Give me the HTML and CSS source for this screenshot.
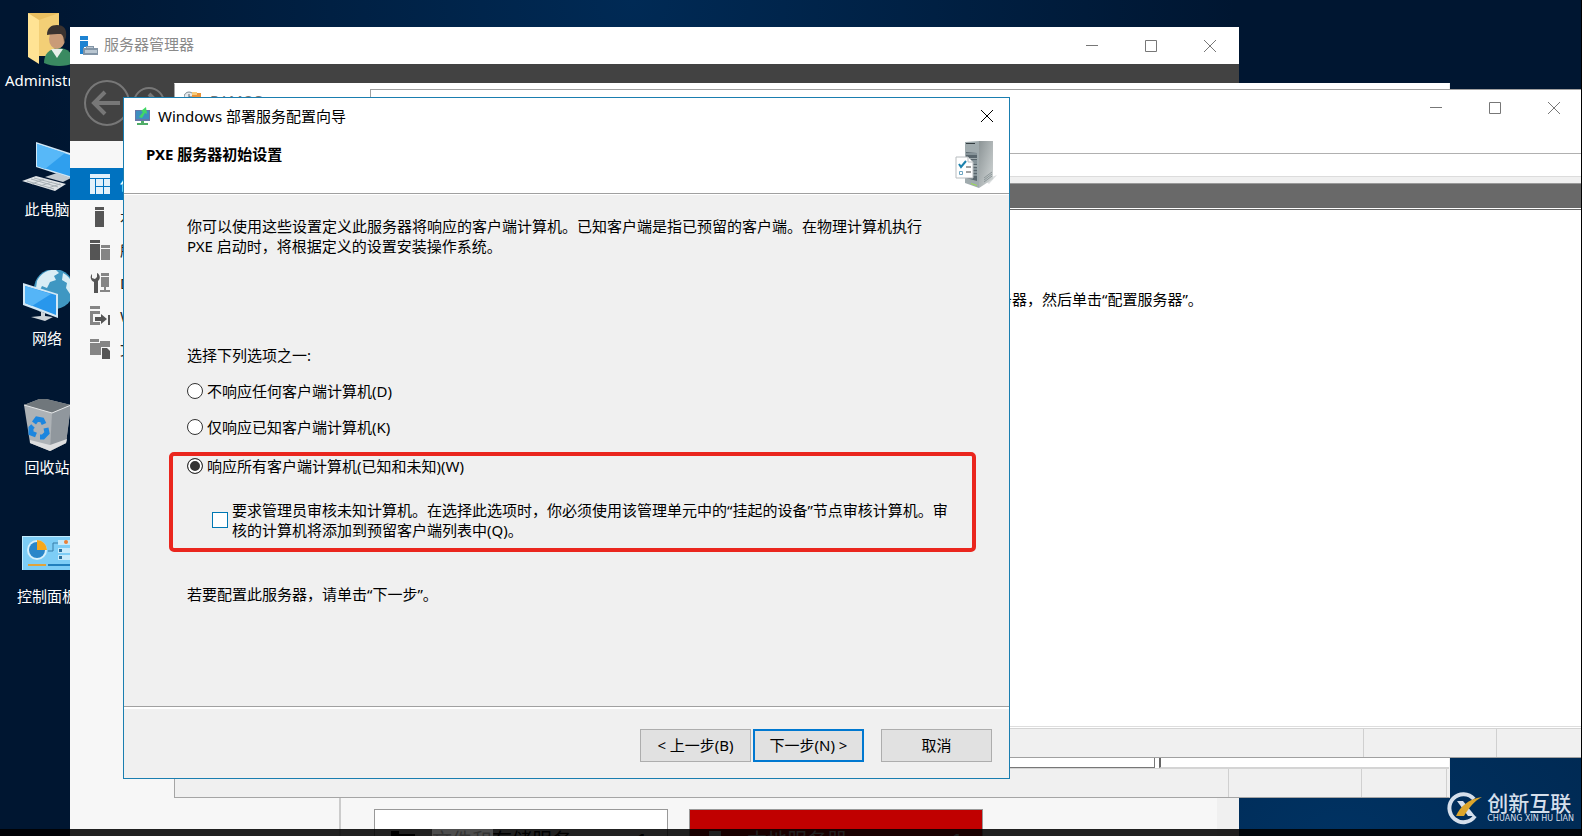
FILE: index.html
```html
<!DOCTYPE html>
<html lang="zh-CN">
<head>
  <meta charset="UTF-8" />
  <meta name="viewport" content="width=device-width, initial-scale=1.0"/>
  <title>Windows 部署服务配置向导</title>
  <link rel="stylesheet" href="styles.css">
</head>
<body>
  <main class="desktop">

    <!-- desktop shortcuts -->
    <nav class="shortcuts">
      <a class="shortcut" href="#">
        <svg width="56" height="56" viewBox="0 0 56 56">
          <path d="M8 1h31v43H18z" fill="#e9bf60"/>
          <path d="M8 1l11 7v44L8 45z" fill="#ffe394"/>
          <path d="M19 8L39 1v43H19z" fill="#f3cf76"/>
          <path d="M24 51c0-9 5-14 14-15 10 0 16 6 16 15-8 4-22 4-30 0z" fill="#3a8a61"/>
          <path d="M31 37l6 9 6-9z" fill="#e8efe9"/>
          <ellipse cx="37" cy="27" rx="8" ry="10" fill="#c99b78"/>
          <path d="M27 23c0-7 4-10 10-10 7 0 10 4 9 12l-2 6c0-5-1-8-3-9-5 0-10 0-14 1z" fill="#3b3330"/>
        </svg>
        <span>Administrator</span>
      </a>
      <a class="shortcut" href="#">
        <svg width="56" height="56" viewBox="0 0 56 56">
          <path d="M16 1l40 13v25L16 26z" fill="#cfe6f5"/>
          <path d="M17 3l39 13v21L17 25z" fill="#2f9fee"/>
          <path d="M17 3l28 9-20 16-8-3z" fill="#57b8f8"/>
          <path d="M25 36l12-4 14 5-8 4z" fill="#c3cbd1"/>
          <path d="M2 40l14-5 30 8-11 7z" fill="#dfe3e6"/>
          <path d="M7 40l27 8M11 38l27 8M14 37l27 7M12 43l12-5M20 45l12-4M28 47l12-4" stroke="#a9b1b6" fill="none"/>
        </svg>
        <span>此电脑</span>
      </a>
      <a class="shortcut" href="#">
        <svg width="56" height="56" viewBox="0 0 56 56">
          <circle cx="34" cy="19" r="20" fill="#3f97c2"/>
          <path d="M17 11c4-8 11-12 19-11l3 3-5 3 2 4-6 2-3 6-5-2-2 4-4-2zM43 3c6 3 10 9 11 16l-4 5-4-6 1-5-5-3z" fill="#d8edf5"/>
          <path d="M3 13l35 11v24L3 35z" fill="#d3e8f5"/>
          <path d="M5 16l31 9v20L5 33z" fill="#2897ec"/>
          <path d="M5 16l26 8-19 12-7-3z" fill="#55b5f7"/>
          <path d="M17 40l4 2v4l-10 1 14 4 8-4-8-1v-3z" fill="#ccd3d8"/>
        </svg>
        <span>网络</span>
      </a>
      <a class="shortcut" href="#">
        <svg width="56" height="56" viewBox="0 0 56 56">
          <path d="M4 6l18-7 29 7-5 38-16 8-20-8z" fill="#adb2b6"/>
          <path d="M4 6l18-7 29 7-19 8z" fill="#70777c"/>
          <path d="M32 14l19-8-5 38-16 8z" fill="#90979d"/>
          <path d="M10 41l20 5 17-6-1 4-16 8-20-8z" fill="#dddedf"/>
          <path d="M4 6l28 8 19-8" stroke="#e5e7e8" fill="none"/>
          <path d="M14 24l3-4 5 1 2 4M26 29l1 5-4 4h-3M16 36l-5-2v-5l2-2" stroke="#1c86df" stroke-width="5" fill="none"/>
        </svg>
        <span>回收站</span>
      </a>
      <a class="shortcut" href="#">
        <svg width="56" height="56" viewBox="0 0 56 56">
          <path d="M2 8h54v34H2z" fill="#7dcdf6"/>
          <path d="M2 8h54v1H2zM2 8h1v34H2z" fill="#c3ecff"/>
          <circle cx="17" cy="22" r="10" fill="#d7f0fb"/>
          <circle cx="17" cy="22" r="8" fill="#2a86c9"/>
          <path d="M17 22V12a10 10 0 0 1 10 10z" fill="#f7a81d"/>
          <path d="M28 23h5v-8h5" stroke="#397ca8" fill="none"/>
          <path d="M38 12h12v5H38zM38 20h12v5H38zM38 27h12v5H38z" fill="#c6eafb"/>
          <circle cx="46" cy="14" r="2" fill="#e98037"/>
          <path d="M39 21h3v3h-3zM39 28h3v3h-3z" fill="#286f9d"/>
          <path d="M8 36h18v2H8z" fill="#e1a33b"/>
          <path d="M28 36h22v2H28z" fill="#217fbd"/>
        </svg>
        <span>控制面板</span>
      </a>
    </nav>

    <!-- server manager -->
    <section class="window manager">
      <header class="titlebar">
        <svg width="20" height="20" viewBox="0 0 20 20">
          <path d="M1 0h8v4H1zM1 5h8v6H5v7H1z" fill="#1e83d2"/>
          <path d="M7 10h8v2h4v7H4v-7h3z" fill="#8395a6"/>
          <path d="M8 11h6v1H8zM6 14h12v3H6z" fill="#b9c6d1"/>
        </svg>
        <span class="caption">服务器管理器</span>
        <button class="control" aria-label="最小化"><svg width="12" height="12"><path d="M0 5.500h12"/></svg></button>
        <button class="control" aria-label="最大化"><svg width="12" height="12"><path d="M.5.5h11v11H.5z"/></svg></button>
        <button class="control" aria-label="关闭"><svg width="12" height="12"><path d="M0 0l12 12M12 0L0 12"/></svg></button>
      </header>
      <div class="navbar">
        <svg width="90" height="50" viewBox="0 0 90 50">
          <circle cx="25" cy="25" r="22"/>
          <circle cx="67" cy="25" r="15"/>
          <path class="arrow" d="M12 25h26M23 14L12 25l11 11M58 25h18M67 16l9 9-9 9"/>
        </svg>
      </div>
      <div class="manager-body">
        <nav class="sidebar">
          <a class="active" href="#">
            <svg width="20" height="20" viewBox="0 0 20 20"><path d="M0 0h20v4H0zM0 5h5v15H0zM6 5h7v7H6zM14 5h6v7h-6zM6 13h7v7H6zM14 13h6v7h-6z"/></svg>
            <span>仪表板</span>
          </a>
          <a href="#">
            <svg width="20" height="20" viewBox="0 0 20 20"><path d="M5 0h9v3H5zM5 4h9v16H5z"/></svg>
            <span>本地服务器</span>
          </a>
          <a href="#">
            <svg width="20" height="20" viewBox="0 0 20 20"><path d="M0 0h10v3H0zM0 4h10v16H0z"/><path class="light" d="M11 5h9v3h-9zM11 9h9v11h-9z"/></svg>
            <span>所有服务器</span>
          </a>
          <a href="#">
            <svg width="20" height="20" viewBox="0 0 20 20"><path d="M2 1v4l3 1 2-2V0c3 1 4 6 1 8v12H4V9C0 7 0 3 2 1z"/><path class="light" d="M11 0h8v3h-8zM11 4h8v10h-8zM14 14h2v3h4v2H10v-2h4z"/></svg>
            <span>DHCP</span>
          </a>
          <a href="#">
            <svg width="20" height="20" viewBox="0 0 20 20"><path class="light" d="M0 0h10v3H0zM0 5h10v3H3v8h7v3H0z"/><path d="M5 11h6V8l6 5-6 5v-3H5zM18 9h2v10h-2z"/></svg>
            <span>WDS</span>
          </a>
          <a href="#">
            <svg width="20" height="20" viewBox="0 0 20 20"><path class="light" d="M0 0h9v3H0zM0 4h10V2h10v6h-9v8H0z"/><path d="M12 9h5l3 3v8h-8z"/></svg>
            <span>文件和存储服务</span>
          </a>
        </nav>
        <div class="tiles">
          <div class="tile">
            <svg width="24" height="20" viewBox="0 0 24 20"><path d="M0 0h8v3h16v15H0z"/></svg>
            <span>文件和存储服务</span><b>1</b>
          </div>
          <div class="tile alert">
            <svg width="24" height="20" viewBox="0 0 24 20"><path d="M3 0h12v18H3z"/></svg>
            <span>本地服务器</span><b>1</b>
          </div>
        </div>
        <div class="gutter"></div>
      </div>
    </section>

    <!-- console behind -->
    <section class="window console-back">
      <header class="console-title">
        <svg width="18" height="18" viewBox="0 0 18 18">
          <circle cx="5" cy="6" r="5" fill="#e5e9ec" stroke="#7f8b93"/>
          <path d="M5 3v3h3" stroke="#55636d" fill="none"/>
          <path d="M8 2h9v8H8z" fill="#e89236"/>
          <path d="M8 1h5v3H8z" fill="#f7ca79"/>
        </svg>
        <span>RAMOS</span>
      </header>
      <div class="scrollstrip"><i></i><b></b></div>
      <footer class="statusbar"><span></span><span></span></footer>
    </section>

    <!-- deployment services console -->
    <section class="window console">
      <header class="titlebar">
        <span class="caption"></span>
        <button class="control" aria-label="最小化"><svg width="12" height="12"><path d="M0 5.500h12"/></svg></button>
        <button class="control" aria-label="最大化"><svg width="12" height="12"><path d="M.5.5h11v11H.5z"/></svg></button>
        <button class="control" aria-label="关闭"><svg width="12" height="12"><path d="M0 0l12 12M12 0L0 12"/></svg></button>
      </header>
      <div class="menubar"></div>
      <div class="toolbar"></div>
      <div class="banner"></div>
      <div class="console-body"><p>服务器，然后单击“配置服务器”。</p></div>
      <footer class="statusbar"><span></span><span></span></footer>
    </section>

    <!-- wizard -->
    <form class="window wizard">
      <header class="wizard-title">
        <svg width="18" height="20" viewBox="0 0 18 20">
          <path d="M1 4h15v11H1z" fill="#6878a8"/>
          <path d="M2 5h13v8H2z" fill="#3e8fc0"/>
          <path d="M7 15h3v2h4v2H3v-2h4z" fill="#50ad68"/>
          <path d="M5 11l4-5-2-1 5-4 1 7-2-1-3 5z" fill="#42d765"/>
        </svg>
        <h1>Windows 部署服务配置向导</h1>
        <button class="control" type="button" aria-label="关闭"><svg width="14" height="14"><path d="M1 1l12 12M13 1L1 13"/></svg></button>
      </header>
      <div class="wizard-head">
        <h2>PXE 服务器初始设置</h2>
        <svg width="46" height="50" viewBox="0 0 46 50">
          <defs>
            <linearGradient id="side" x1="0" y1="0" x2="1" y2="1">
              <stop offset="0" stop-color="#8c9496"/><stop offset="1" stop-color="#d3d8d8"/>
            </linearGradient>
          </defs>
          <path d="M30 40l13-5-8 9z" fill="#dcdfe0"/>
          <path d="M11 2l14-1v47l-14-5z" fill="#a0abae"/>
          <path d="M25 1h14v38l-14 9z" fill="url(#side)"/>
          <path d="M12 3h9v1h-9z" fill="#333c40"/>
          <path d="M12 12l11 1v5H12zM12 19h11v6H12zM12 26l11 1v14l-11-3z" fill="#59666d"/>
          <path d="M12 14h11M12 21h11M12 23h11M12 29h11M12 32h11M12 35h11" stroke="#b3bfc4"/>
          <path d="M17 43l6 2v1l-6-2z" fill="#9be04e"/>
          <path d="M30 38l8-6M30 40l8-6M30 42l8-6" stroke="#8c9698"/>
          <path d="M2 17h12l5 5v16H2z" fill="#fff" stroke="#b8bdc0"/>
          <path d="M14 17v5h5" fill="none" stroke="#b8bdc0"/>
          <path d="M5 24l2 3 5-6" fill="none" stroke="#1d82ad" stroke-width="2"/>
          <path d="M5.500 31.500h3v3h-3z" fill="none" stroke="#6ea6c2"/>
          <path d="M12 27h5M12 32h5" stroke="#444"/>
        </svg>
      </div>
      <div class="wizard-body">
        <p class="intro">你可以使用这些设置定义此服务器将响应的客户端计算机。已知客户端是指已预留的客户端。在物理计算机执行 PXE 启动时，将根据定义的设置安装操作系统。</p>
        <p>选择下列选项之一:</p>
        <div class="option"><input type="radio" name="answer" id="none"><label for="none">不响应任何客户端计算机(D)</label></div>
        <div class="option"><input type="radio" name="answer" id="known"><label for="known">仅响应已知客户端计算机(K)</label></div>
        <div class="marked">
          <div class="option"><input type="radio" name="answer" id="all" checked><label for="all">响应所有客户端计算机(已知和未知)(W)</label></div>
          <div class="option approve"><input type="checkbox" id="approve"><label for="approve">要求管理员审核未知计算机。在选择此选项时，你必须使用该管理单元中的“挂起的设备”节点审核计算机。审核的计算机将添加到预留客户端列表中(Q)。</label></div>
        </div>
        <p>若要配置此服务器，请单击“下一步”。</p>
      </div>
      <footer class="wizard-foot">
        <button type="button">&lt; 上一步(B)</button>
        <button type="button" class="primary">下一步(N) &gt;</button>
        <button type="button" class="cancel">取消</button>
      </footer>
    </form>

    <div class="taskbar"><i></i></div>

    <div class="brand">
      <svg width="36" height="34" viewBox="0 0 36 34">
        <path d="M27 8A14 14 0 1 0 28 25" fill="none" stroke="#d5dfeb" stroke-width="4"/>
        <path d="M10 10h6l12 15h-7z" fill="#d5dfeb"/>
        <path d="M9 25c4-9 12-17 26-19-8 4-13 11-18 19z" fill="#dba52c"/>
      </svg>
      <div>
        <strong>创新互联</strong>
        <small>CHUANG XIN HU LIAN</small>
      </div>
    </div>
  </main>
</body>
</html>
```

FILE: styles.css
```css
* {
  box-sizing: border-box;
}
body {
  margin: 0;
  font-family: "Noto Sans", "Noto Sans CJK SC", sans-serif;
  font-size: 15px;
  line-height: 20px;
  color: #000;
}
p, h1, h2 {
  margin: 0;
}
button, input {
  font: inherit;
  margin: 0;
}
svg {
  flex: none;
}
.desktop {
  position: relative;
  height: 100vh;
  overflow: hidden;
  border-right: 1px solid #000;
  background:
    radial-gradient(ellipse at 85% 100%, #003262 0%, rgba(0, 50, 98, 0) 50%),
    radial-gradient(ellipse at 40% 0%, #002a55 0%, rgba(0, 42, 85, 0) 45%),
    #001631;
}

/* desktop shortcuts */
.shortcuts {
  display: flex;
  flex-direction: column;
  gap: 49px;
  width: 84px;
  margin-left: 5px;
  padding-top: 12px;
}
.shortcut {
  display: flex;
  flex-direction: column;
  color: #fff;
  text-decoration: none;
}
.shortcut svg {
  margin-left: 15px;
}
.shortcut span {
  line-height: 24px;
  text-align: center;
  white-space: nowrap;
}

/* windows */
.window {
  position: absolute;
  display: flex;
  flex-direction: column;
}
.titlebar {
  display: flex;
  align-items: center;
  background: #fff;
}
.caption {
  flex: 1;
  color: #8a8a8a;
}
.control {
  display: flex;
  align-items: center;
  justify-content: center;
  width: 59px;
  height: 30px;
  padding: 0;
  border: none;
  background: none;
}
.control path {
  fill: none;
  stroke: #777;
}
.statusbar {
  display: flex;
  justify-content: flex-end;
  height: 29px;
  border-top: 1px solid #d4d4d4;
  background: #f0f0f0;
}
.statusbar span {
  width: 133px;
  border-left: 1px solid #d0d0d0;
}

.manager {
  left: 70px;
  right: 342px;
  top: 27px;
  bottom: 0;
  background: #f7f7f7;
}
.manager .titlebar {
  height: 37px;
  padding-left: 9px;
}
.manager .caption {
  padding: 0 0 3px 5px;
}
.navbar {
  height: 77px;
  padding: 14px 12px;
  background: #424242;
}
.navbar circle,
.navbar path {
  fill: none;
  stroke: #777;
  stroke-width: 2;
}
.navbar .arrow {
  stroke-width: 4;
}
.manager-body {
  flex: 1;
  display: flex;
}
.sidebar {
  width: 271px;
  padding-top: 27px;
  border-right: 2px solid #ccc;
}
.sidebar a {
  display: flex;
  align-items: center;
  gap: 10px;
  height: 33px;
  padding-left: 20px;
  color: #222;
  text-decoration: none;
}
.sidebar svg {
  fill: #555;
}
.sidebar .light {
  fill: #858585;
}
.sidebar .active {
  height: 32px;
  color: #fff;
  background: #0072c0;
}
.sidebar .active svg {
  fill: #e3f1fb;
}
.tiles {
  flex: 1;
  display: flex;
  align-items: flex-end;
  gap: 21px;
  padding-left: 33px;
}
.tile {
  display: flex;
  align-items: flex-start;
  gap: 17px;
  width: 294px;
  height: 27px;
  padding: 21px 20px 0 16px;
  border: 1px solid #999;
  border-bottom: none;
  background: #fff;
  font-size: 20px;
  line-height: 20px;
  overflow: hidden;
}
.tile b {
  margin-left: auto;
}
.alert {
  background: #c00000;
  color: #fff;
}
.alert svg {
  fill: #fff;
}
.gutter {
  width: 22px;
  background: #f0f0f0;
}

.console-back {
  left: 174px;
  right: 131px;
  top: 83px;
  bottom: 38px;
  border: 1px solid #a5a5a5;
  border-top-color: #fff;
  border-right-color: #f0f0f0;
  background: #f0f0f0;
}
.console-title {
  display: flex;
  flex: 1;
  gap: 8px;
  padding: 7px 9px;
  background: #fff;
  color: #777;
  line-height: 18px;
}
.scrollstrip {
  display: flex;
  gap: 4px;
  height: 11px;
  background: #fff;
}
.scrollstrip i {
  width: 980px;
  border-right: 1px solid #777;
  border-bottom: 1px solid #777;
}
.scrollstrip b {
  flex: 1;
  border-left: 2px solid #666;
  border-bottom: 1px solid #d4d4d4;
}
.console-back .statusbar {
  padding-right: 2px;
}
.console-back .statusbar span:last-child {
  width: 86px;
  border-right: 1px solid #d0d0d0;
}

.console {
  left: 370px;
  right: -3px;
  top: 89px;
  bottom: 78px;
  border: 1px solid #a0a0a0;
  background: #fff;
}
.console .titlebar {
  height: 63px;
  align-items: flex-start;
  padding-top: 3px;
}
.menubar {
  height: 24px;
  border-top: 1px solid #b0b0b0;
  border-bottom: 1px solid #dcdcdc;
}
.toolbar {
  height: 6px;
  background: #f0f0f0;
}
.banner {
  height: 27px;
  border-top: 1px solid #999;
  border-bottom: 3px double #666;
  background: #696969;
  background-clip: padding-box;
}
.console-body {
  flex: 1;
  padding: 79px 0 0 611px;
  border-bottom: 1px solid #ddd;
  margin-bottom: 1px;
}
.console .statusbar span:last-child {
  width: 87px;
}

/* wizard */
.wizard {
  left: 123px;
  width: 887px;
  top: 97px;
  bottom: 57px;
  border: 1px solid #1a7eb0;
  background: #f0f0f0;
}
.wizard-title {
  display: flex;
  align-items: center;
  height: 36px;
  padding-left: 10px;
  background: #fff;
}
.wizard h1 {
  flex: 1;
  padding-left: 6px;
  font-size: 15px;
  font-weight: normal;
}
.wizard-title .control {
  width: 44px;
}
.wizard-title .control path {
  stroke: #000;
}
.wizard-head {
  display: flex;
  align-items: center;
  justify-content: space-between;
  height: 60px;
  padding: 2px 9px 0 22px;
  border-bottom: 1px solid #a0a0a0;
  background: #fff;
}
.wizard-head h2 {
  padding-bottom: 22px;
  font-size: 15px;
}
.wizard-body {
  flex: 1;
  padding: 21px 33px 0 63px;
  border-top: 1px solid #fff;
}
.intro {
  max-width: 750px;
  margin-bottom: 89px;
}
.option {
  display: flex;
  align-items: center;
  gap: 4px;
  margin-top: 16px;
}
.option input {
  appearance: none;
  flex: none;
  width: 16px;
  height: 16px;
  border: 1px solid #333;
  background: #fff;
}
.option input[type="radio"] {
  border-radius: 50%;
}
.option input[type="radio"]:checked {
  background: #333;
  box-shadow: inset 0 0 0 2px #fff;
}
.option input[type="checkbox"] {
  border-color: #0078b4;
}
.marked {
  width: 807px;
  margin: 15px 0 32px -18px;
  padding: 0 0 8px 14px;
  border: 4px solid #ea261e;
  border-radius: 5px;
}
.marked .option {
  margin-top: 0;
}
.marked .approve {
  margin: 24px 0 0 25px;
}
.approve label {
  max-width: 725px;
}
.wizard-foot {
  display: flex;
  justify-content: flex-end;
  gap: 2px;
  height: 72px;
  padding: 22px 17px 0 0;
  border-top: 1px solid #a0a0a0;
  box-shadow: inset 0 2px #fff;
}
.wizard-foot button {
  width: 111px;
  height: 33px;
  padding: 0 0 2px;
  border: 1px solid #adadad;
  background: #e1e1e1;
}
.wizard-foot .primary {
  border: 2px solid #0078d0;
}
.wizard-foot .cancel {
  margin-left: 15px;
}

.taskbar {
  position: absolute;
  left: 0;
  right: 0;
  bottom: 0;
  height: 7px;
  padding-left: 432px;
  background: rgba(0, 0, 0, 0.87);
}
.taskbar i {
  display: block;
  width: 61px;
  height: 7px;
  background: rgba(255, 255, 255, 0.2);
}
.brand {
  position: absolute;
  right: 7px;
  bottom: 11px;
  display: flex;
  gap: 4px;
  color: #d5dfeb;
}
.brand strong,
.brand small {
  display: block;
}
.brand strong {
  font-size: 21px;
  font-weight: 500;
  line-height: 24px;
}
.brand small {
  font-family: "DejaVu Sans", sans-serif;
  font-size: 8px;
  line-height: 8px;
}
```
